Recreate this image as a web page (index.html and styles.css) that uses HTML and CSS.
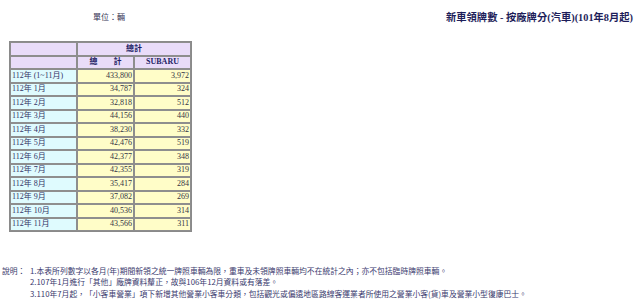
FILE: index.html
```html
<!DOCTYPE html>
<html lang="zh-Hant">
<head>
<meta charset="utf-8">
<title>新車領牌數 - 按廠牌分(汽車)</title>
<link rel="stylesheet" href="styles.css">
</head>
<body>
<div class="top">
  <div class="unit">單位：輛</div>
  <div class="title">新車領牌數 - 按廠牌分(汽車)(101年8月起)</div>
</div>
<table class="data">
  <tr class="hd">
    <th class="c1"></th>
    <th colspan="2">總計</th>
  </tr>
  <tr class="hd">
    <th class="c1"></th>
    <th class="c2">總　　計</th>
    <th class="c3">SUBARU</th>
  </tr>
  <tr><td class="lbl">112年 (1~11月)</td><td class="num">433,800</td><td class="num">3,972</td></tr>
  <tr><td class="lbl">112年 1月</td><td class="num">34,787</td><td class="num">324</td></tr>
  <tr><td class="lbl">112年 2月</td><td class="num">32,818</td><td class="num">512</td></tr>
  <tr><td class="lbl">112年 3月</td><td class="num">44,156</td><td class="num">440</td></tr>
  <tr><td class="lbl">112年 4月</td><td class="num">38,230</td><td class="num">332</td></tr>
  <tr><td class="lbl">112年 5月</td><td class="num">42,476</td><td class="num">519</td></tr>
  <tr><td class="lbl">112年 6月</td><td class="num">42,377</td><td class="num">348</td></tr>
  <tr><td class="lbl">112年 7月</td><td class="num">42,355</td><td class="num">319</td></tr>
  <tr><td class="lbl">112年 8月</td><td class="num">35,417</td><td class="num">284</td></tr>
  <tr><td class="lbl">112年 9月</td><td class="num">37,082</td><td class="num">269</td></tr>
  <tr><td class="lbl">112年 10月</td><td class="num">40,536</td><td class="num">314</td></tr>
  <tr><td class="lbl">112年 11月</td><td class="num">43,566</td><td class="num">311</td></tr>
</table>
<div class="notes">
  <div class="label">說明：</div>
  <div class="lines">
    <div>1.本表所列數字以各月(年)期間新領之統一牌照車輛為限，重車及未領牌照車輛均不在統計之內；亦不包括臨時牌照車輛。</div>
    <div>2.107年1月進行「其他」廠牌資料釐正，故與106年12月資料或有落差。</div>
    <div>3.110年7月起，「小客車營業」項下新增其他營業小客車分類，包括觀光或偏遠地區路線客運業者所使用之營業小客(貨)車及營業小型復康巴士。</div>
  </div>
</div>
</body>
</html>
```
FILE: styles.css
```css
html, body {
  margin: 0;
  padding: 0;
  background: #ffffff;
}
body {
  font-family: "Liberation Serif", "Noto Sans CJK TC", serif;
  color: #2a2a66;
  width: 640px;
}
.top {
  height: 32px;
  display: flex;
  align-items: center;
  justify-content: space-between;
  padding: 0 7px 0 93px;
}
.unit {
  font-family: "Noto Sans CJK TC", sans-serif;
  font-size: 8px;
  color: #333355;
}
.title {
  font-size: 10.3px;
  font-weight: bold;
  color: #1e1e5a;
}
.data {
  margin: 9px 0 0 9px;
  border: 1px solid #8a8a8a;
  border-spacing: 0;
  table-layout: fixed;
  width: 183px;
  font-size: 8px;
}
.data th, .data td {
  border: 1px solid #8e8e8e;
  height: 13.5px;
  box-sizing: border-box;
  padding: 0 1px;
  line-height: 10px;
  white-space: nowrap;
}
.hd th {
  background: #e9dcf9;
  color: #1e1e66;
  font-weight: bold;
  text-align: center;
}
.c1 { width: 67px; }
.c2 { width: 57px; }
.c3 { width: 57px; }
.lbl {
  background: #dffbfe;
  text-align: left;
  color: #333366;
}
.num {
  background: #fffdc8;
  text-align: right;
  color: #333344;
}
.notes {
  margin-top: 32.5px;
  display: flex;
  font-family: "Noto Sans CJK TC", sans-serif;
  font-size: 7.8px;
  line-height: 11.5px;
  color: #3a3a6e;
  padding-left: 2px;
}
.label {
  width: 28px;
  flex: none;
}
.lines {
  white-space: nowrap;
}
```
